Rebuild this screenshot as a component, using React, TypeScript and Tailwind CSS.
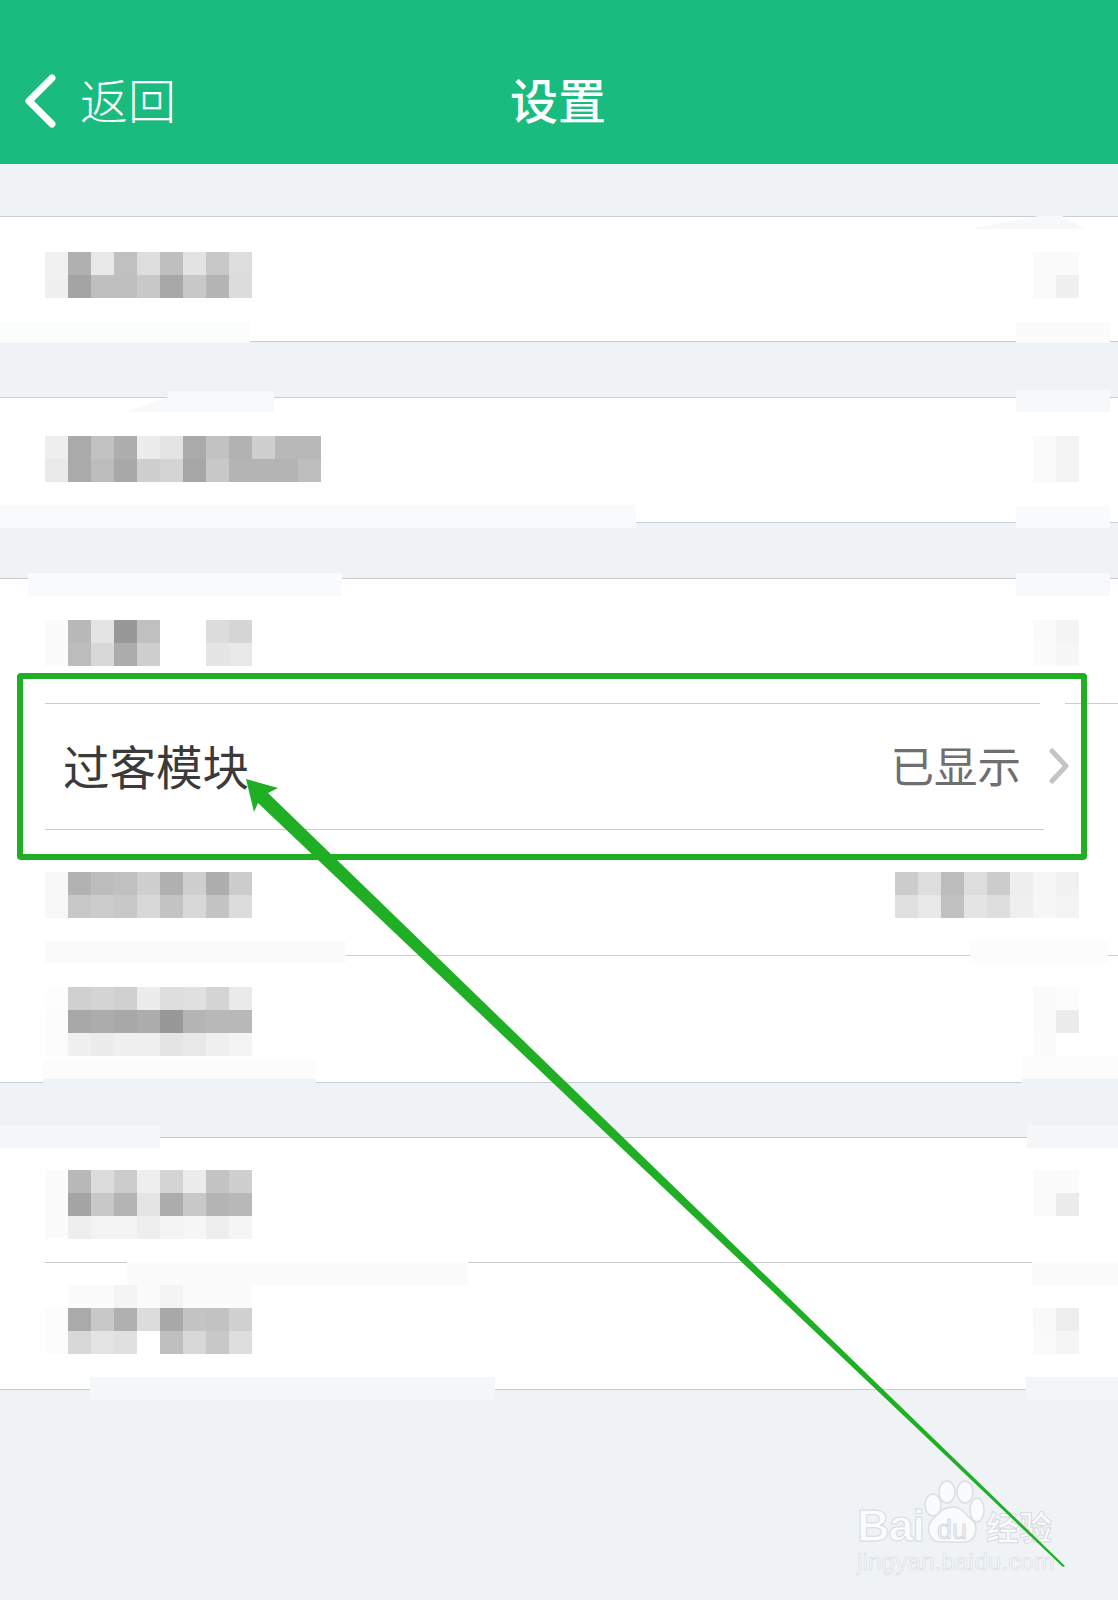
import React from "react";

// greys sampled from the mosaic blocks, one string per row of 23px cells
type Cells = string[][];

const W = "#ffffff";

const rows: { left: Cells; right: Cells; top: string; inset: boolean; height: string }[][] = [
  [
    {
      top: "pt-[35px]",
      height: "h-[125px]",
      inset: false,
      left: [
        ["#f1f1f1", "#b0b0b0", "#e8e8e8", "#c0c0c0", "#dddddd", "#bfbfbf", "#e3e3e3", "#c8c8c8", "#dddddd"],
        ["#f0f0f0", "#a4a4a4", "#bfbfbf", "#bfbfbf", "#c8c8c8", "#a8a8a8", "#c8c8c8", "#b4b4b4", "#dcdcdc"],
      ],
      right: [
        ["#fafafa", "#fafafa"],
        ["#fafafa", "#f0f0f0"],
      ],
    },
  ],
  [
    {
      top: "pt-[38px]",
      height: "h-[125px]",
      inset: false,
      left: [
        ["#eeeeee", "#aaaaaa", "#c2c2c2", "#aeaeae", "#ececec", "#e4e4e4", "#aaaaaa", "#c2c2c2", "#b2b2b2", "#cfcfcf", "#b8b8b8", "#b8b8b8"],
        ["#eaeaea", "#aaaaaa", "#bcbcbc", "#a8a8a8", "#cfcfcf", "#d4d4d4", "#a6a6a6", "#c8c8c8", "#b4b4b4", "#b4b4b4", "#b4b4b4", "#bebebe"],
      ],
      right: [
        ["#fafafa", "#f3f3f3"],
        ["#fafafa", "#f3f3f3"],
      ],
    },
  ],
  [
    {
      top: "pt-[41px]",
      height: "h-[125px]",
      inset: true,
      left: [
        ["#fbfbfb", "#b8b8b8", "#e4e4e4", "#989898", "#c0c0c0", W, W, "#dcdcdc", "#d6d6d6"],
        ["#fbfbfb", "#bcbcbc", "#d8d8d8", "#acacac", "#cfcfcf", W, W, "#e5e5e5", "#e8e8e8"],
      ],
      right: [
        ["#fafafa", "#f4f4f4"],
        ["#fbfbfb", "#f7f7f7"],
      ],
    },
    { top: "", height: "h-[126px]", inset: true, left: [], right: [] },
    {
      top: "pt-[42px]",
      height: "h-[126px]",
      inset: true,
      left: [
        ["#f8f8f8", "#b2b2b2", "#bcbcbc", "#c0c0c0", "#cfcfcf", "#b0b0b0", "#cfcfcf", "#aeaeae", "#cccccc"],
        ["#f8f8f8", "#c8c8c8", "#cccccc", "#c8c8c8", "#d8d8d8", "#c4c4c4", "#d8d8d8", "#c4c4c4", "#dcdcdc"],
      ],
      right: [
        ["#cccccc", "#dddddd", "#bcbcbc", "#dddddd", "#cccccc", "#eeeeee", "#f6f6f6", "#f1f1f1"],
        ["#e0e0e0", "#e8e8e8", "#c0c0c0", "#e4e4e4", "#dedede", "#efefef", "#f7f7f7", "#f3f3f3"],
      ],
    },
    {
      top: "pt-[31px]",
      height: "h-[127px]",
      inset: false,
      left: [
        ["#fdfdfd", "#d0d0d0", "#d4d4d4", "#d0d0d0", "#ececec", "#dedede", "#e0e0e0", "#d4d4d4", "#eaeaea"],
        ["#fcfcfc", "#a8a8a8", "#acacac", "#a8a8a8", "#acacac", "#989898", "#b4b4b4", "#b8b8b8", "#b8b8b8"],
        ["#fcfcfc", "#f0f0f0", "#ececec", "#f0f0f0", "#f0f0f0", "#e4e4e4", "#e8e8e8", "#f0f0f0", "#f4f4f4"],
      ],
      right: [
        ["#fafafa", "#fcfcfc"],
        ["#fafafa", "#ececec"],
        ["#fbfbfb", W],
      ],
    },
  ],
  [
    {
      top: "pt-[32px]",
      height: "h-[125px]",
      inset: true,
      left: [
        ["#fbfbfb", "#b8b8b8", "#dcdcdc", "#cccccc", "#eeeeee", "#d4d4d4", "#ececec", "#c4c4c4", "#cfcfcf"],
        ["#fbfbfb", "#a4a4a4", "#c8c8c8", "#b4b4b4", "#e4e4e4", "#acacac", "#c8c8c8", "#b4b4b4", "#b8b8b8"],
        ["#fbfbfb", "#eeeeee", "#f3f3f3", "#f3f3f3", "#eeeeee", "#f4f4f4", "#f6f6f6", "#eeeeee", "#f5f5f5"],
      ],
      right: [
        ["#fafafa", "#fbfbfb"],
        ["#fafafa", "#ececec"],
      ],
    },
    {
      top: "pt-[22px]",
      height: "h-[127px]",
      inset: false,
      left: [
        [W, "#fbfbfb", "#fbfbfb", "#f4f4f4", "#fbfbfb", "#f4f4f4", "#fbfbfb", "#fbfbfb", "#fbfbfb"],
        ["#fcfcfc", "#aaaaaa", "#c8c8c8", "#b0b0b0", "#dcdcdc", "#a8a8a8", "#c4c4c4", "#c2c2c2", "#d0d0d0"],
        ["#fcfcfc", "#d8d8d8", "#e4e4e4", "#e0e0e0", W, "#bfbfbf", "#d8d8d8", "#c8c8c8", "#dedede"],
      ],
      right: [
        [W, W],
        ["#f9f9f9", "#eeeeee"],
        ["#fafafa", "#f5f5f5"],
      ],
    },
  ],
];

// retouched patches lying over the row dividers in the screenshot
const patches = [
  "left-0 top-[322px] w-[250px] h-[21px] bg-[#fbfcfc]",
  "left-[125px] top-[391px] w-[149px] h-[21px] bg-[#f7f9fa] [clip-path:polygon(0_100%,29%_30%,29%_0,100%_0,100%_100%)]",
  "left-0 top-[505px] w-[636px] h-[23px] bg-[#f9fafb]",
  "left-[28px] top-[573px] w-[314px] h-[23px] bg-[#f9fafb]",
  "left-[970px] top-[216px] w-[115px] h-[13px] bg-[#f6f8f9] [clip-path:polygon(0_100%,60%_0,80%_0,100%_100%)]",
  "left-[1016px] top-[322px] w-[94px] h-[21px] bg-[#fbfbfc]",
  "left-[1016px] top-[390px] w-[94px] h-[22px] bg-[#f7f8fa]",
  "left-[1016px] top-[505px] w-[94px] h-[23px] bg-[#fafbfc]",
  "left-[1016px] top-[573px] w-[94px] h-[23px] bg-[#f8f9fb]",
  "left-[1040px] top-[700px] w-[25px] h-[6px] bg-white",
  "left-[1044px] top-[826px] w-[38px] h-[6px] bg-white",
  "left-[1087px] top-[826px] w-[31px] h-[6px] bg-white",
  "left-[45px] top-[941px] w-[301px] h-[22px] bg-[#fbfbfb]",
  "left-[970px] top-[941px] w-[138px] h-[22px] bg-[#fcfcfc]",
  "left-[43px] top-[1060px] w-[273px] h-[19px] bg-[#fcfcfc]",
  "left-[43px] top-[1079px] w-[273px] h-[5px] bg-[#eff3f6]",
  "left-[1022px] top-[1056px] w-[96px] h-[23px] bg-[#fcfcfc]",
  "left-[1022px] top-[1079px] w-[96px] h-[5px] bg-[#eff3f6]",
  "left-0 top-[1125px] w-[160px] h-[23px] bg-[#f4f6f8]",
  "left-[1027px] top-[1125px] w-[91px] h-[23px] bg-[#f4f6f8]",
  "left-[127px] top-[1262px] w-[341px] h-[23px] bg-[#fbfbfb]",
  "left-[1032px] top-[1262px] w-[86px] h-[23px] bg-[#fbfbfb]",
  "left-[90px] top-[1377px] w-[405px] h-[23px] bg-[#f4f7f8]",
  "left-[1026px] top-[1377px] w-[92px] h-[23px] bg-[#f4f5f7]",
];

const Mosaic = ({ cells }: { cells: Cells }) => (
  <div className="flex flex-col">
    {cells.map((row, i) => (
      <div key={i} className="flex">
        {row.map((c, j) => (
          <div key={j} className="w-[23px] h-[23px]" style={{ backgroundColor: c }} />
        ))}
      </div>
    ))}
  </div>
);

const Watermark = () => (
  <div className="absolute left-[855px] top-[1480px] w-[205px] h-[100px]">
    <svg className="absolute left-0 top-0" width="205" height="100" viewBox="855 1480 205 100">
      <g fill="#fafbfc" stroke="#dcdfe2" strokeWidth="1.5">
        <ellipse cx="933" cy="1505" rx="8" ry="11" />
        <ellipse cx="947" cy="1492" rx="8" ry="11" />
        <ellipse cx="965" cy="1492" rx="8" ry="11" />
        <ellipse cx="977" cy="1510" rx="7" ry="12" />
        <path d="M953 1507c10 0 13 9 20 14 5 5 4 20-8 21-8 1-16-1-24 0-12 0-15-13-10-21 6-5 10-14 22-14z" />
      </g>
    </svg>
    <span className="absolute left-[2px] top-[21px] text-[45px] leading-[50px] font-bold tracking-[-1px] text-[#fafbfc] [-webkit-text-stroke:1px_#d8dbde] [font-family:'Liberation_Sans',sans-serif]">
      Bai
    </span>
    <span className="absolute left-[82px] top-[35px] text-[27px] leading-[30px] text-[#eff0f2] [-webkit-text-stroke:0.6px_#c9ccd0] [font-family:'Liberation_Sans',sans-serif]">
      du
    </span>
    <span className="absolute left-[131px] top-[24px] text-[33px] leading-[44px] font-bold text-[#fafbfc] [-webkit-text-stroke:1px_#d8dbde]">
      经验
    </span>
    <span className="absolute left-[2px] top-[67px] text-[24.5px] leading-[30px] whitespace-nowrap text-[#f6f7f9] [-webkit-text-stroke:0.6px_#d8dbde] [font-family:'Liberation_Sans',sans-serif]">
      jingyan.baidu.com
    </span>
  </div>
);

export default function App() {
  return (
    <div className="relative w-[1118px] h-[1600px] overflow-hidden bg-[#eff3f6] [font-family:'Noto_Sans_CJK_SC','Noto_Sans',sans-serif]">
      <header className="relative h-[164px] bg-[#1abb7e] flex items-center justify-center pt-[32px] text-white">
        <div className="absolute left-[25px] top-[74px] flex items-center gap-[21px]">
          <svg width="34" height="54" viewBox="25 74 34 54" fill="none">
            <path d="M52 78L29 101L52 124" stroke="#ffffff" strokeWidth="7" strokeLinecap="round" strokeLinejoin="round" />
          </svg>
          <span className="text-[48px] leading-[54px] font-light -translate-y-[3px]">返回</span>
        </div>
        <h1 className="text-[48px] leading-[54px] font-medium -ml-[2px]">设置</h1>
      </header>

      {rows.map((group, g) => (
        <section
          key={g}
          className={`border-t border-[#c9cdd1] bg-white ${g === 0 ? "mt-[52px]" : g === 3 ? "mt-[54px]" : "mt-[55px]"}`}
        >
          {group.map((row, r) => {
            const isTarget = g === 2 && r === 1;
            return (
              <div key={r} className={`${row.height} ${row.inset ? "ml-[45px]" : "pl-[45px]"} border-b border-[#c9cdd1]`}>
                {isTarget ? (
                  <div className="h-full flex items-center justify-between pl-[18px] pr-[49px] pb-[3px]">
                    <span className="text-[46.5px] leading-[54px] text-[#3a3a3a]">过客模块</span>
                    <div className="flex items-center gap-[28px]">
                      <span className="text-[43.5px] leading-[50px] text-[#6f6f6f]">已显示</span>
                      <svg className="translate-y-[1px]" width="20" height="36" viewBox="0 0 20 36" fill="none">
                        <path d="M3 3L17 18L3 33" stroke="#c4c4c4" strokeWidth="5" strokeLinecap="round" strokeLinejoin="round" />
                      </svg>
                    </div>
                  </div>
                ) : (
                  <div className={`h-full flex items-start justify-between pr-[39px] ${row.top}`}>
                    <Mosaic cells={row.left} />
                    <Mosaic cells={row.right} />
                  </div>
                )}
              </div>
            );
          })}
        </section>
      ))}

      {patches.map((p) => (
        <div key={p} className={`absolute ${p}`} />
      ))}

      <Watermark />

      {/* annotation drawn over the screenshot */}
      <div className="absolute left-[17px] top-[673px] w-[1070px] h-[187px] border-[6px] border-[#1fae24] rounded-[4px]" />
      <svg className="absolute left-0 top-0 pointer-events-none" width="1118" height="1600" viewBox="0 0 1118 1600">
        <polygon points="246,779 278,788 268,793 1065,1566 1063,1567 258,803 254,812" fill="#1fae24" />
      </svg>
    </div>
  );
}
